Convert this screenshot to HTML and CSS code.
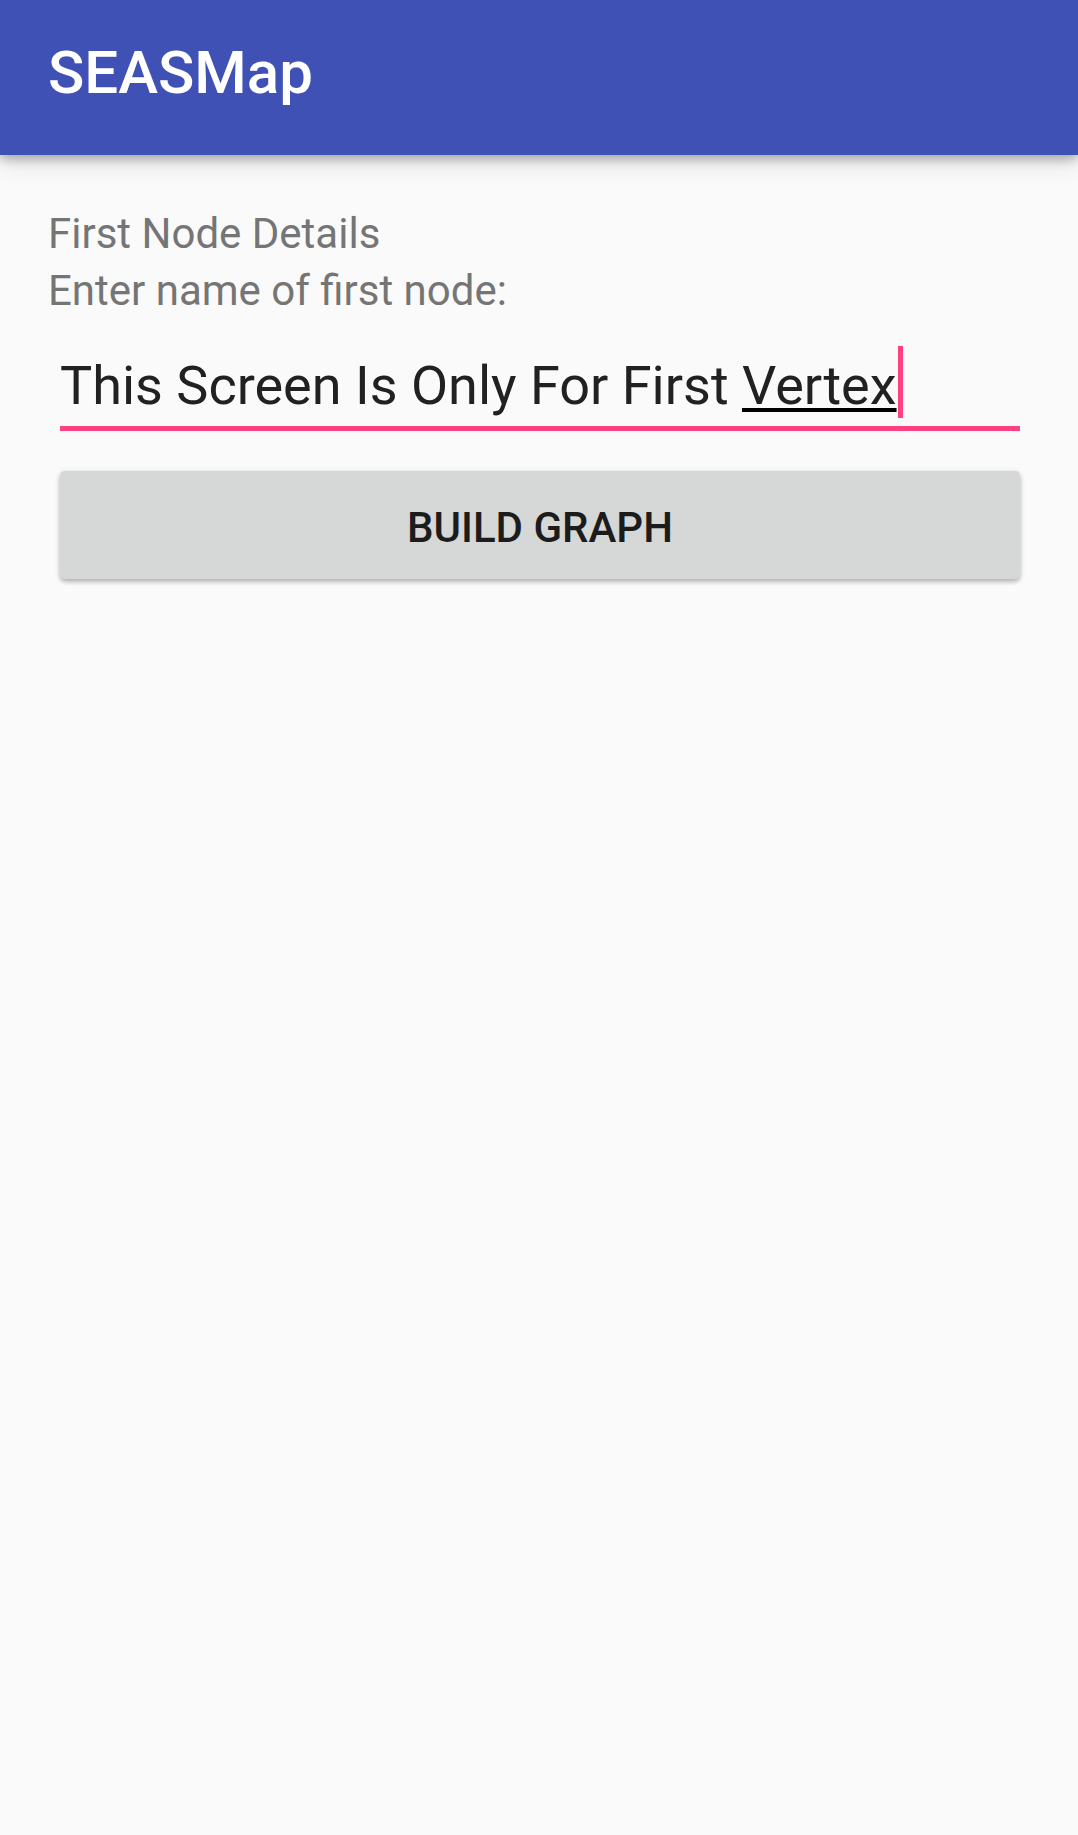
FILE: index.html
```html
<!DOCTYPE html>
<html>
<head>
<meta charset="utf-8">
<link rel="stylesheet" href="styles.css">
</head>
<body>
<header class="appbar">
  <h1 class="title">SEASMap</h1>
</header>
<main class="content">
  <div class="labels">
    <p class="label">First Node Details</p>
    <p class="label">Enter name of first node:</p>
  </div>
  <div class="field">
    <span class="field-text">This Screen Is Only For First <span class="composing">Vertex</span><span class="cursor"></span></span>
  </div>
  <button class="btn">BUILD GRAPH</button>
</main>
</body>
</html>
```
FILE: styles.css
```css
html, body {
  margin: 0;
  padding: 0;
  background: #fafafa;
  font-family: Roboto, "Noto Sans", sans-serif;
}
body {
  min-height: 1835px;
}
.appbar {
  position: relative;
  z-index: 1;
  height: 155px;
  box-sizing: border-box;
  background: #3f51b5;
  padding: 38px 0 0 48px;
  box-shadow: 0 4px 10px rgba(0,0,0,0.28), 0 10px 22px rgba(0,0,0,0.10);
}
.title {
  margin: 0;
  font-size: 60px;
  font-weight: 500;
  color: #ffffff;
  line-height: 70px;
}
.content {
  padding: 50px 58px 0 48px;
  display: flex;
  flex-direction: column;
}
.labels {
  display: flex;
  flex-direction: column;
}
.label {
  margin: 0;
  font-size: 42px;
  line-height: 57px;
  color: #757575;
}
.field {
  margin: 35px 0 0 12px;
  border-bottom: 5px solid #ff4081;
  padding-bottom: 7px;
  height: 65px;
}
.field-text {
  position: relative;
  font-size: 54px;
  line-height: 64px;
  color: #212121;
  white-space: nowrap;
}
.composing {
  text-decoration: underline;
  text-decoration-thickness: 4px;
  text-underline-offset: 4px;
  text-decoration-color: #000;
}
.cursor {
  position: absolute;
  right: -6px;
  top: -8px;
  width: 5px;
  height: 72px;
  background: #ff4081;
}
.btn {
  margin: 40px 0 0 12px;
  height: 108px;
  border: none;
  border-radius: 5px;
  background: #d6d7d7;
  font-family: Roboto, "Noto Sans", sans-serif;
  font-weight: 500;
  font-size: 42px;
  color: #1c1c1c;
  padding: 4px 0 0 0;
  box-shadow: 0 3px 4px rgba(0,0,0,0.22), 0 1px 6px rgba(0,0,0,0.10);
}
```
